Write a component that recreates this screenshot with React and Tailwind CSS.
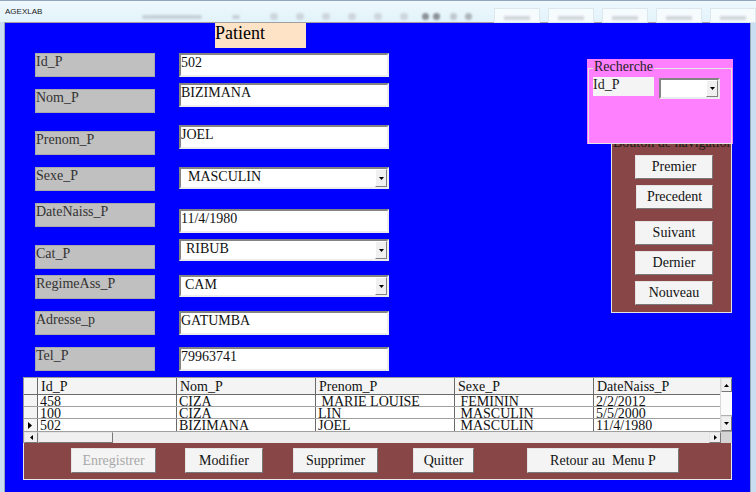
import React from "react";

const sunken =
  "border-2 border-t-[#848484] border-l-[#848484] border-r-[#ececec] border-b-[#ececec]";
const raised =
  "border border-t-[#e4e4e4] border-l-[#e4e4e4] border-r-[#787878] border-b-[#787878]";

function Tri({ dir = "down" }) {
  if (dir === "down")
    return (
      <svg width="5" height="3" viewBox="0 0 5 3">
        <polygon points="0,0 5,0 2.5,3" fill="#000" />
      </svg>
    );
  if (dir === "up")
    return (
      <svg width="5" height="3" viewBox="0 0 5 3">
        <polygon points="0,3 5,3 2.5,0" fill="#000" />
      </svg>
    );
  if (dir === "left")
    return (
      <svg width="3" height="5" viewBox="0 0 3 5">
        <polygon points="3,0 3,5 0,2.5" fill="#000" />
      </svg>
    );
  return (
    <svg width="3" height="5" viewBox="0 0 3 5">
      <polygon points="0,0 0,5 3,2.5" fill="#000" />
    </svg>
  );
}

function DropBtn({ className = "" }) {
  return (
    <div
      className={`w-[12px] h-full flex items-center justify-center bg-[#f0f0f0] border border-t-white border-l-white border-r-[#808080] border-b-[#808080] ${className}`}
    >
      <Tri />
    </div>
  );
}

function Label({ text, className }) {
  return (
    <div
      className={`h-[24px] w-[120px] bg-[#c0c0c0] border border-[#aaaaaa] text-[14px] leading-[16px] text-[#333] ${className}`}
    >
      {text}
    </div>
  );
}

function Field({ value, className }) {
  return (
    <div
      className={`h-[24px] w-[210px] bg-white ${sunken} text-[14px] leading-[16px] text-[#111] ${className}`}
    >
      {value}
    </div>
  );
}

function Combo({ value, indent, className }) {
  return (
    <div className={`h-[22px] w-[210px] bg-white ${sunken} flex ${className}`}>
      <div className={`flex-1 ${indent} text-[14px] leading-[16px] text-[#111]`}>{value}</div>
      <DropBtn />
    </div>
  );
}

function Btn({ children, className, disabled }) {
  return (
    <div
      className={`h-[24px] flex items-center justify-center bg-[#f4f4f4] ${raised} text-[14px] leading-[16px] ${
        disabled ? "text-[#a8a8a8]" : "text-[#111]"
      } ${className}`}
    >
      {children}
    </div>
  );
}

const rows = [
  ["458", "CIZA", " MARIE LOUISE", " FEMININ", "2/2/2012"],
  ["100", "CIZA", "LIN", " MASCULIN", "5/5/2000"],
  ["502", "BIZIMANA", "JOEL", " MASCULIN", "11/4/1980"],
];
const headers = ["Id_P", "Nom_P", "Prenom_P", "Sexe_P", "DateNaiss_P"];
const colW = ["w-[139px]", "w-[139px]", "w-[139px]", "w-[139px]", "w-[126px]"];

function Grid() {
  return (
    <div className="ml-[18px] w-[709px] h-[66px] border-t border-l border-[#9a9a9a] bg-white flex flex-col text-[14px] text-[#111]">
      <div className="flex h-[53px]">
        <div className="flex flex-col">
          <div className="flex h-[17px] bg-[#f4f4f4] border-b border-[#6a6a6a]">
            <div className="w-[14px] border-r border-[#6a6a6a]" />
            {headers.map((h, i) => (
              <div
                key={h}
                className={`${colW[i]} ${i < 4 ? "border-r border-[#6a6a6a]" : ""} pl-[3px] leading-[17px] overflow-hidden`}
              >
                {h}
              </div>
            ))}
          </div>
          {rows.map((r, ri) => (
            <div
              key={ri}
              className={`flex h-[12px] ${ri < 2 ? "border-b border-[#a0a0a0]" : ""}`}
            >
              <div className="w-[14px] bg-[#f4f4f4] border-r border-[#6a6a6a] flex items-center pl-[4px]">
                {ri === 2 && (
                  <svg width="4" height="7" viewBox="0 0 4 7">
                    <polygon points="0,0 0,7 4,3.5" fill="#000" />
                  </svg>
                )}
              </div>
              {r.map((c, ci) => (
                <div
                  key={ci}
                  className={`${colW[ci]} ${ci < 4 ? "border-r border-[#6a6a6a]" : ""} pl-[2px] leading-[13px] overflow-hidden whitespace-pre`}
                >
                  {c}
                </div>
              ))}
            </div>
          ))}
        </div>
        <div className="w-[12px] flex flex-col bg-[#f4f4f4] border-l border-[#d8d8d8]">
          <div className={`h-[14px] flex items-center justify-center bg-[#f0f0f0] ${raised}`}>
            <Tri dir="up" />
          </div>
          <div className="h-[24px] bg-[#fbfbfb] border-b border-[#b0b0b0]" />
          <div className={`flex-1 flex items-center justify-center bg-[#f0f0f0] ${raised}`}>
            <Tri dir="down" />
          </div>
        </div>
      </div>
      <div className="flex h-[13px] border-t border-[#a0a0a0]">
        <div className={`w-[14px] flex items-center justify-center bg-[#f0f0f0] ${raised}`}>
          <Tri dir="left" />
        </div>
        <div className={`w-[75px] bg-[#f0f0f0] ${raised}`} />
        <div className="w-[596px] bg-[#ececec]" />
        <div className={`w-[12px] flex items-center justify-center bg-[#f0f0f0] ${raised}`}>
          <Tri dir="right" />
        </div>
        <div className="flex-1 bg-[#d4d4d4]" />
      </div>
    </div>
  );
}

export default function App() {
  return (
    <div className="w-[756px] h-[492px] overflow-hidden bg-[#d6eaf6] flex flex-col font-['Liberation_Serif','Times_New_Roman',serif]">
      {/* title bar */}
      <div className="h-[22px] shrink-0 flex items-start border-t border-[#8fa6bd] bg-gradient-to-b from-[#eef8fd] to-[#e2f3fb] font-['Liberation_Sans',Arial,sans-serif]">
        <div className="ml-[5px] mt-[6px] text-[8px] leading-[10px] text-[#1a1a1a]">AGEXLAB</div>
        <div className="ml-[100px] mt-[14px] w-[70px] h-[4px] bg-[#c6d2da] rounded-full blur-[1px]" />
        <div className="ml-[30px] mt-[14px] w-[10px] h-[4px] bg-[#c6d2da] rounded-full blur-[1px]" />
        <div className="ml-[30px] mt-[12px] flex gap-[18px]">
          {[0, 1, 2, 3, 4, 5].map((i) => (
            <div key={i} className="w-[8px] h-[7px] bg-[#cdd6dc] rounded-sm blur-[1px]" />
          ))}
        </div>
        <div className="ml-[14px] mt-[12px] flex gap-[4px]">
          <div className="w-[7px] h-[7px] bg-[#8a9096] rounded-full blur-[1px]" />
          <div className="w-[7px] h-[7px] bg-[#8a9096] rounded-full blur-[1px]" />
          <div className="ml-[6px] w-[7px] h-[7px] bg-[#c0c8ce] rounded-sm blur-[1px]" />
          <div className="ml-[4px] w-[7px] h-[7px] bg-[#acb4ba] rounded-full blur-[1px]" />
        </div>
        <div className="ml-[22px] mt-[7px] flex gap-[8px]">
          {[0, 1, 2, 3, 4].map((i) => (
            <div key={i} className="w-[46px] h-[15px] bg-[#f6fbfe] border border-[#dde8ee] blur-[0.5px] flex items-end justify-center pb-[2px]">
              <div className="w-[26px] h-[4px] bg-[#d0d6da] blur-[1px]" />
            </div>
          ))}
        </div>
      </div>

      <div className="flex flex-1">
        <div className="w-[5px] bg-[#c9def0] border-r border-[#9aa8b4]" />
        <div className="w-[745px] bg-[#0000ff] flex flex-col border-t border-[#a0a0a0]">
          {/* top section */}
          <div className="flex h-[354px]">
            <div className="w-[384px] flex flex-col">
              <div className="ml-[210px] w-[91px] h-[25px] bg-[#fee3c6] text-[18px] leading-[20px] text-black">
                Patient
              </div>
              <div className="flex mt-[5px]">
                <div className="ml-[30px] w-[120px] flex flex-col">
                  <Label text="Id_P" className="" />
                  <Label text="Nom_P" className="mt-[12px]" />
                  <Label text="Prenom_P" className="mt-[18px]" />
                  <Label text="Sexe_P" className="mt-[12px]" />
                  <Label text="DateNaiss_P" className="mt-[12px]" />
                  <Label text="Cat_P" className="mt-[18px]" />
                  <Label text="RegimeAss_P" className="mt-[6px]" />
                  <Label text="Adresse_p" className="mt-[12px]" />
                  <Label text="Tel_P" className="mt-[12px]" />
                </div>
                <div className="ml-[24px] w-[210px] flex flex-col">
                  <Field value="502" />
                  <Field value="BIZIMANA" className="mt-[6px]" />
                  <Field value="JOEL" className="mt-[18px]" />
                  <Combo value="MASCULIN" indent="pl-[7px]" className="mt-[18px]" />
                  <Field value="11/4/1980" className="mt-[20px]" />
                  <Combo value="RIBUB" indent="pl-[5px]" className="mt-[6px]" />
                  <Combo value="CAM" indent="pl-[4px]" className="mt-[14px]" />
                  <Field value="GATUMBA" className="mt-[14px]" />
                  <Field value="79963741" className="mt-[12px]" />
                </div>
              </div>
            </div>

            <div className="ml-[198px] w-[146px] flex flex-col">
              <div className="relative z-10 mt-[36px] h-[85px] bg-[#ff80ff]">
                <fieldset className="ml-[1px] mr-[1px] h-[85px] border border-[#e4e4e4]">
                  <legend className="ml-[4px] px-[1px] pb-[3px] text-[14px] leading-[16px] text-[#222]">
                    Recherche
                  </legend>
                  <div className="flex items-start -mt-[1px] ml-[4px]">
                    <div className="w-[61px] h-[19px] bg-[#f4f4f4] text-[14px] leading-[16px] text-[#222]">
                      Id_P
                    </div>
                    <div className={`ml-[5px] mt-[1px] w-[61px] h-[21px] bg-white ${sunken} flex justify-end`}>
                      <DropBtn />
                    </div>
                  </div>
                </fieldset>
              </div>
              <div className="ml-[24px] w-[121px] h-[169px] bg-[#884646] border-l border-r border-b border-[#e4e4e4] overflow-hidden flex flex-col">
                <div className="flex items-start h-[7px]">
                  <div className="mt-[1px] w-[5px] h-[1px] bg-[#e4e4e4]" />
                  <div className="ml-[1px] -mt-[9px] whitespace-nowrap text-[14px] leading-[16px] text-[#1a1a1a]">
                    Bouton de navigation
                  </div>
                </div>
                <Btn className="ml-[23px] mt-[4px] w-[78px]">Premier</Btn>
                <Btn className="ml-[24px] mt-[6px] w-[77px] border-[#6a6a6a]">Precedent</Btn>
                <Btn className="ml-[23px] mt-[12px] w-[78px]">Suivant</Btn>
                <Btn className="ml-[23px] mt-[6px] w-[78px]">Dernier</Btn>
                <Btn className="ml-[23px] mt-[6px] w-[78px]">Nouveau</Btn>
              </div>
            </div>
          </div>

          <Grid />

          <div className="ml-[18px] w-[709px] h-[37px] bg-[#884646] border-l border-r border-b border-[#e8e8e8] flex items-start pt-[5px]">
            <Btn className="ml-[47px] w-[85px] h-[25px]" disabled>
              Enregistrer
            </Btn>
            <Btn className="ml-[29px] w-[78px] h-[25px]">Modifier</Btn>
            <Btn className="ml-[30px] w-[85px] h-[25px]">Supprimer</Btn>
            <Btn className="ml-[35px] w-[61px] h-[25px]">Quitter</Btn>
            <Btn className="ml-[53px] w-[152px] h-[25px] whitespace-pre">Retour au  Menu P</Btn>
          </div>
        </div>
        <div className="flex-1 bg-[#c9def0] border-l border-[#9aa8b4]" />
      </div>
    </div>
  );
}
